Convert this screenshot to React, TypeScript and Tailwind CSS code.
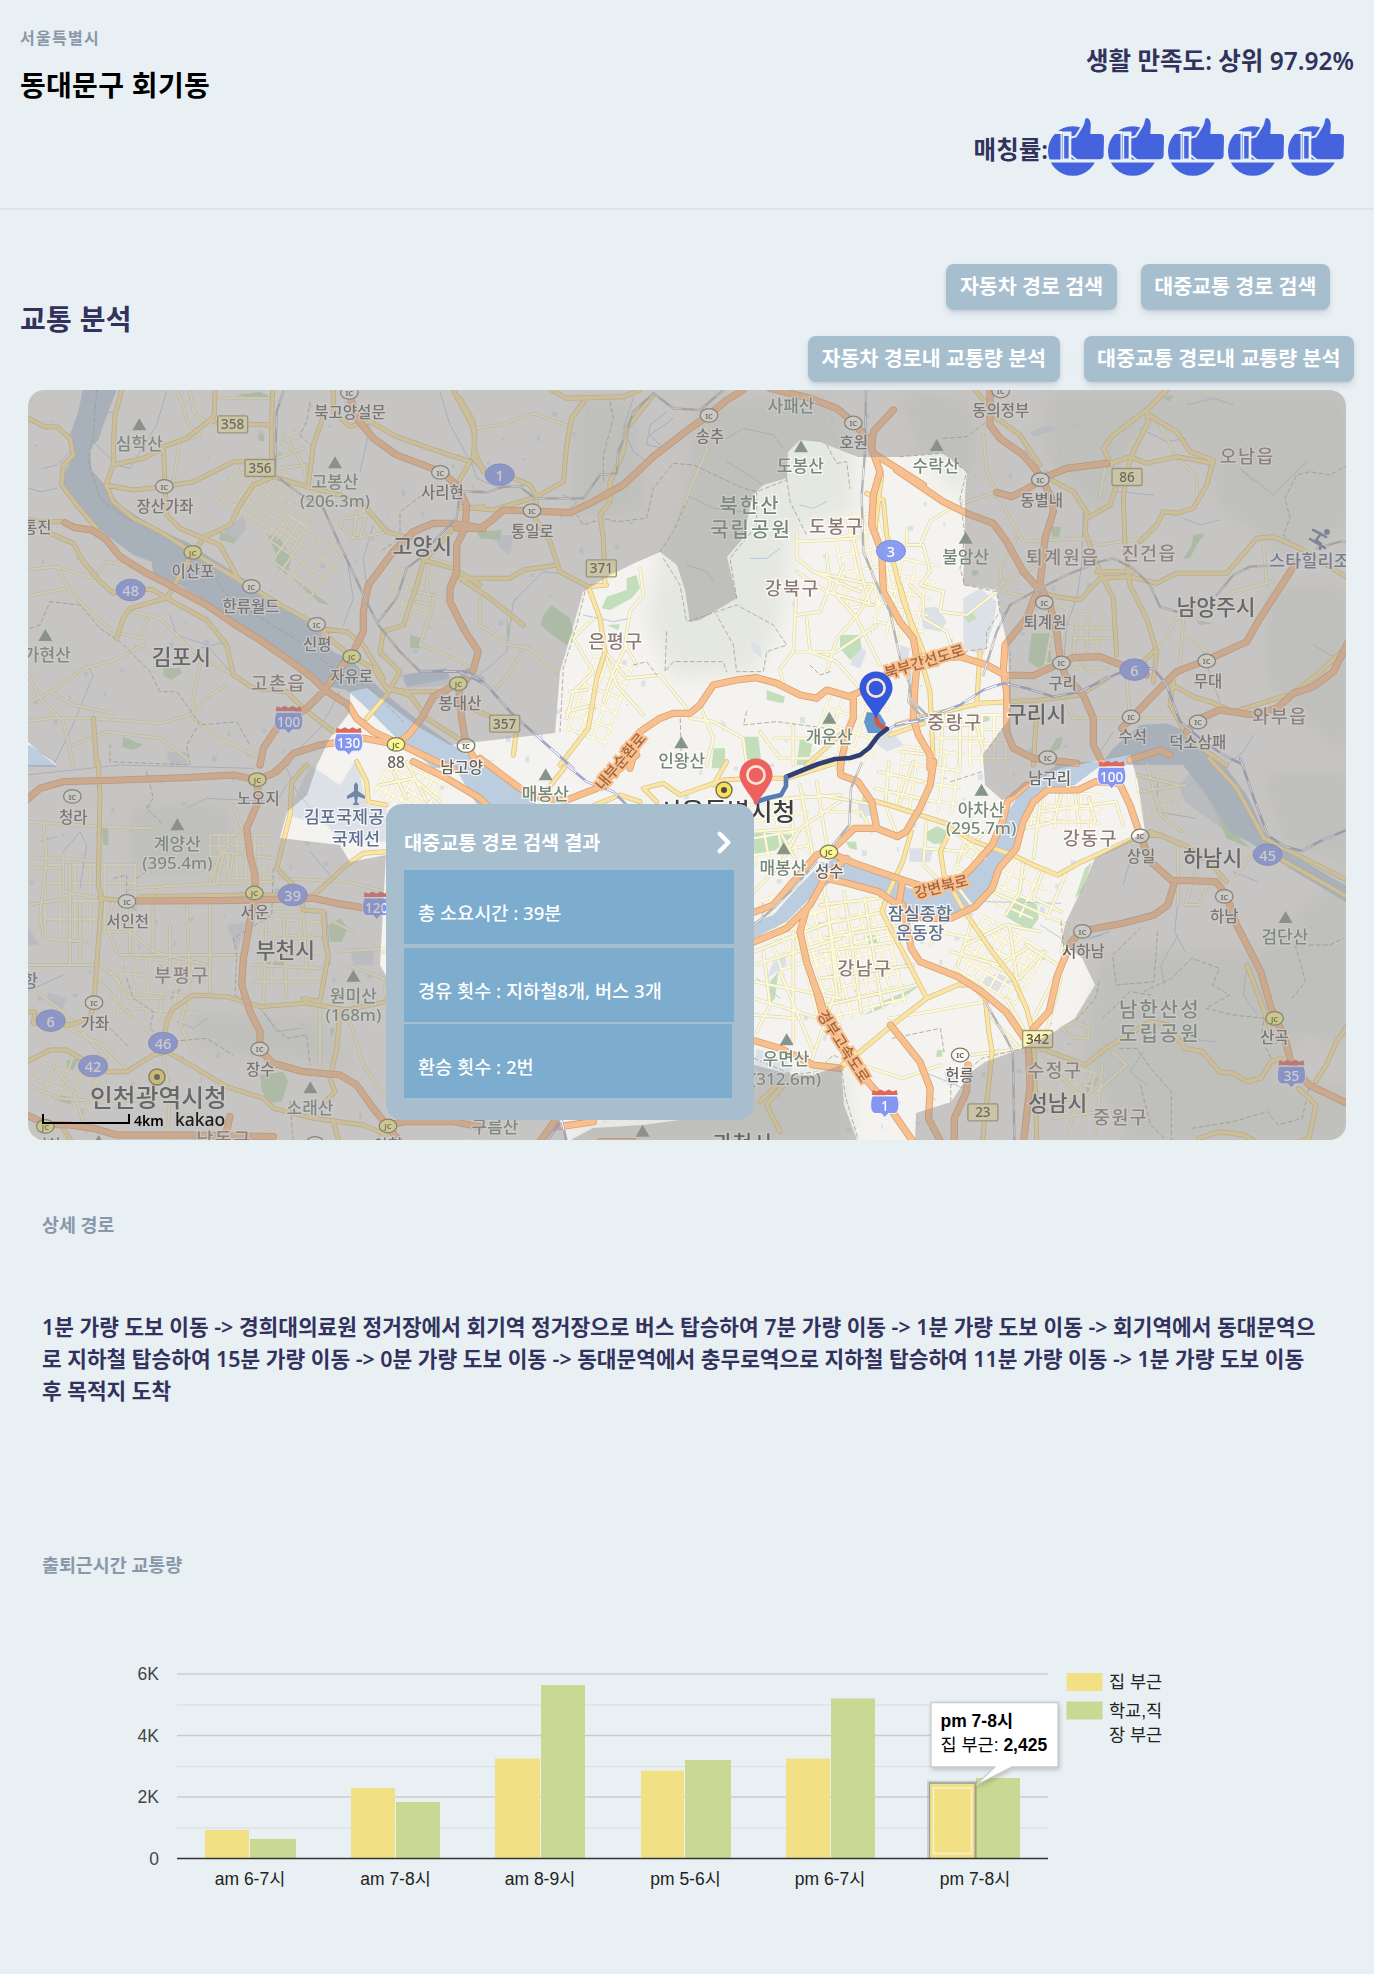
import React from "react";
import { ChevronRight } from "lucide-react";

const KR = "font-['Noto_Sans','Noto_Sans_CJK_KR',sans-serif]";

/* ---------- Map data: each sheet has its own origin and scale ---------- */

type Sheet = "A" | "B" | "C" | "D" | "E" | "F";

const sheets: Record<Sheet, [number, number, number]> = {
  A: [20, 385, 3],
  B: [460, 385, 3],
  C: [900, 385, 3],
  D: [20, 765, 3],
  E: [380, 765, 3],
  F: [820, 765, 2.904],
};

const place = (s: Sheet, x: number, y: number): [number, number] => [
  sheets[s][0] + x / sheets[s][2],
  sheets[s][1] + y / 3,
];

type Paths = Record<Sheet, string>;

const water: Paths = {
  A: "M188,15 L290,15 L265,80 L250,120 L235,165 L210,190 L215,255 L255,300 L300,360 L360,400 L430,440 L500,470 L560,510 L640,560 L760,640 L830,690 L900,740 L940,800 L1000,830 L1060,890 L1100,930 L1200,1010 L1300,1080 L1400,1150 L1240,1150 L1120,1050 L1030,960 L980,915 L930,905 L860,870 L760,790 L650,730 L600,690 L560,650 L480,600 L400,570 L395,530 L340,510 L260,450 L220,420 L180,370 L130,310 L135,260 L160,210 L150,150 L160,120 L175,80 Z M15,1075 L60,1100 L110,1145 L15,1145 Z M1150,870 L1280,850 L1290,880 L1160,905 Z",
  B: "M0,860 L40,840 L30,890 L0,910 Z",
  C: "M600,1140 L640,1090 L720,1020 L800,1015 L860,1040 L980,1140 Z",
  D: "",
  E: "M215,-10 L330,-10 L440,90 L470,118 L290,118 Z M1122,470 L1180,450 L1250,370 L1310,310 L1380,270 L1380,330 L1290,400 L1220,470 L1122,520 Z",
  F: "M0,290 L100,300 L200,340 L260,370 L350,380 L400,360 L450,310 L510,240 L540,150 L590,70 L660,20 L700,-10 L830,-10 L740,60 L660,80 L610,130 L580,230 L530,310 L490,380 L430,440 L330,460 L240,420 L180,380 L80,350 L0,330Z M1050,-5 L1170,-5 L1240,90 L1290,200 L1390,280 L1540,370 L1540,420 L1380,320 L1260,240 L1190,200 L1130,100 Z",
};

const parks: Paths = {
  A: "M740,445 L780,460 L815,520 L800,570 L770,545 L765,500 Z M600,440 L650,460 L640,475 L598,465 Z M805,570 L930,660 L900,655 Z M430,850 L480,848 L485,865 L455,885 L430,872 Z M1170,750 L1210,760 L1200,790 L1170,790 Z M650,30 L720,20 L750,35 L690,40 Z M310,1055 L370,1080 L340,1095 L305,1085 Z M715,150 h18 v18 h-18z",
  B: "M275,660 L330,700 L340,740 L320,780 L270,745 L242,720 L250,690 Z M500,580 L530,570 L540,610 L515,640 L450,675 L425,670 L440,635 L500,615 Z M1140,750 L1200,750 L1205,790 L1170,825 L1140,790 Z M920,915 L975,935 L970,955 L920,945 Z M850,1055 L895,1055 L905,1140 L860,1120 Z M1020,1060 L1060,1080 L1040,1140 L1010,1140 Z M760,1090 h35 v60 h-40z M50,440 L125,435 L120,465 L60,460 Z M140,700 L150,730 L140,770 Z M440,720 L480,718 L475,735 Z",
  C: "M395,745 L450,745 L455,830 L415,850 L385,830 Z M455,425 h28 l-5,30 h-22z M880,450 L915,445 L890,480 L870,520 L850,520 L875,480 Z M190,690 L215,680 L230,700 L205,715 Z M785,35 L820,30 L810,50 Z M885,705 L940,715 L900,720 Z M470,1060 L490,1055 L480,1090 L440,1110 Z M240,990 l25,0 l5,15 l-20,8z M215,555 l20,0 l0,15 l-18,3z",
  D: "M720,930 L790,920 L805,950 L785,1010 L745,1015 L725,975 Z M925,480 L960,460 L985,490 L965,530 L930,530 Z M455,680 L485,670 L470,695 L450,705 Z M245,190 h20 v50 h-15z M140,885 L180,880 L160,915 L140,910 Z M740,590 h60 l-5,15 h-50z M930,790 l15,0 l-10,30z M120,990 L165,1000 L160,1020 L120,1010 Z",
  E: "M330,20 L420,100 L350,60 Z M1122,200 L1240,210 L1180,260 L1122,270 Z M1170,650 L1195,620 L1185,700 L1165,720 Z M1310,470 l20,5 l-8,15z",
  F: "M310,200 L340,183 L375,200 L365,235 L330,237 L305,220 Z M560,405 L590,397 L630,420 L635,460 L610,497 L540,455 Z M125,515 L160,510 L172,540 L145,540 Z M75,230 L105,230 L108,255 L85,250 Z M770,310 L790,290 L760,380 L740,400 Z M1080,20 L1130,80 L1180,180 L1250,250 L1180,220 L1150,140 Z M340,855 h15 v20 h-18z M770,960 L810,935 L800,960 L775,985 Z M130,750 L180,710 L290,660 L260,685 L180,730 Z M630,575 l20,-15 l10,20 l-20,8z",
};

const builtUp: Paths = {
  A: "M610,440 L670,390 L680,430 L640,480 Z M1140,870 L1270,850 L1300,900 L1160,910 Z M440,1100 h60 v40 h-50z",
  B: "M870,770 L900,780 L905,820 L880,800 Z M1190,780 L1220,800 L1200,850 L1170,840 Z M100,450 L160,450 L150,510 L120,490 Z M1230,1060 L1290,1030 L1330,1080 L1280,1100 Z M780,1000 L800,1020 L790,1040 Z",
  C: "M60,670 L110,665 L140,710 L120,740 L70,730 Z M190,640 L240,610 L290,650 L280,720 L250,810 L190,790 Z M0,780 l30,10 l-10,50 l-20,-5z M390,140 L450,120 L465,135 L400,155 Z",
  D: "M800,150 L870,0 L960,60 L1010,-20 L1040,120 L1098,130 L1098,230 L960,230 L920,180 Z M990,550 h70 v50 h-60z M20,480 L60,540 L20,540Z M620,480 L680,470 L650,560 Z M80,680 l60,20 l-10,30 l-40,-10z",
  E: "M1180,590 L1215,560 L1220,600 L1160,640 Z M1130,850 L1240,900 L1200,1000 L1122,900 Z",
  F: "M260,250 L330,250 L320,290 L260,290 Z M470,640 L520,625 L560,650 L510,680 L480,665 Z M1100,0 L1150,90 L1240,220 L1180,200 L1060,110 L1040,60Z M110,110 l30,-10 l10,50 l-35,10z M360,920 l40,0 l0,40 l-30,0z",
};

const hills: Paths = {
  A: "",
  B: "M700,60 L1100,20 L1180,200 L1180,380 L1000,440 L960,720 L880,860 L640,880 L560,700 L600,520 L680,330 Z M340,40 L520,40 L560,380 L340,400 Z",
  C: "M0,20 L200,40 L240,180 L180,340 L60,200 Z M450,20 L1100,15 L1345,20 L1345,420 L1160,520 L950,350 L940,230 L760,110 L660,230 L620,400 L530,330 L430,200 Z M1100,600 L1345,600 L1345,1120 L1100,900 Z",
  D: "M330,120 L640,120 L600,330 L330,330 Z M500,740 L900,760 L1000,900 L800,880 L540,850 Z",
  E: "M560,1080 L1122,900 L1380,930 L1380,1130 L560,1130 Z",
  F: "M820,560 L1280,560 L1540,300 L1540,850 L1400,800 L1300,960 L900,1100 L760,900 Z M0,890 L80,920 L90,1130 L0,1130 Z M880,960 L1540,960 L1540,1130 L880,1130 Z M1280,20 L1540,20 L1540,300 L1350,240Z",
};

const highways: Paths = {
  A: "M135,413 L165,428 L215,435 L255,460 L300,515 L380,565 L440,595 L560,660 L640,715 L720,765 L820,835 L880,880 L915,915 L985,960 L1010,1000 L1060,1040 L1125,1070 L1250,1130 L1300,1150 M990,30 L1010,100 L1060,160 L1130,210 L1210,240 L1265,262 L1310,300 L1340,360 L1335,430 L1310,480 L1310,560 L1290,610 L1290,650 L1330,730 L1375,800 L1355,870 L1315,895 L1240,935 L1205,1000 L1165,1050 L1128,1078 M1390,430 L1300,415 L1240,415 L1180,440 L1120,500 L1045,600 L1030,680 L1030,740 L1000,800 L960,850 L915,915 L860,970 L770,1030 L730,1090 L720,1140 M1315,895 L1325,1000 L1338,1080 L1375,1140 M1128,1078 L1030,1060 L900,1080 L820,1105 L770,1160",
  B: "M-10,430 L60,430 L90,410 L130,375 L215,378 L330,383 L400,350 L490,300 L580,215 L690,130 L745,92 L800,45 L850,15 M930,10 L1050,40 L1130,70 L1180,112 L1230,170 L1240,205 L1390,300 M1300,75 L1240,140 L1235,190 L1260,260 L1240,330 L1235,420 L1265,500 L1270,620 L1320,710 L1360,760 L1372,830 L1365,900 L1360,1000 L1375,1050 L1410,1110 L1410,1150 M510,1150 L540,1040 L600,1000 L640,985 L690,985 L720,960 L760,900 L830,885 L890,878 L950,895 L1020,930 L1070,940 L1100,915 L1170,935 L1220,910 L1290,860 L1340,840 M1180,930 L1180,1000 L1160,1050 L1140,1150",
  C: "M-10,255 L130,350 L200,385 L280,415 L320,470 L370,560 L415,610 L380,700 L315,780 L310,860 L320,920 L320,1040 L340,1090 L400,1120 L530,1135 M270,15 L270,120 L300,160 L370,210 L420,270 L455,340 L460,380 L435,460 L420,600 L450,660 L470,740 L480,820 L495,870 L550,930 L580,1000 L580,1080 L610,1140 M290,322 L335,335 L375,315 L440,275 L500,250 L620,235 M-10,850 L60,825 L180,815 L260,840 L315,870 L400,872 L480,835 L520,818 L600,815 L740,870 M665,1030 L780,910 L830,860 L920,825 L1040,770 L1080,700 L1190,530 M1345,770 L1300,860 L1240,905 L1180,925 L1130,970 L1060,990 L960,975 L900,1000 L860,1040 M690,1125 L780,1095 L810,1110",
  D: "M20,105 L60,70 L130,50 L300,45 L500,38 L640,30 L712,45 L760,25 L800,-10 M712,45 L715,110 L680,190 L690,270 L705,330 L705,400 L690,470 L670,580 L665,660 L690,740 L720,800 L720,855 L760,895 L850,920 L960,930 L1010,960 L1060,1030 L1100,1080 L1140,1130 M350,408 L600,407 L880,400 L950,415 L1040,430 M20,1050 L80,1078 L150,1080 L220,1090 L290,1110 L500,1110 L760,1115 M630,1055 L615,1120 M1100,1080 L1160,1070 L1300,1070 L1380,1085",
  E: "M100,-10 L200,40 L300,100 L330,130 M300,-20 L420,70 L490,100 L560,105 L650,70 L720,10 L770,-30 M1100,540 L1220,490 L1290,420 L1340,330 L1400,280 M1280,430 L1260,500 L1280,590 L1310,680 L1330,760 M1100,820 L1200,850 L1300,900 L1380,910 M1100,450 L1180,420 L1240,350 L1310,270 L1345,258 M540,1085 L640,1070 M480,1130 L530,1060 M660,1130 L760,1130",
  F: "M60,-10 L60,30 L110,50 L150,110 L165,190 L100,190 L60,230 L25,262 L100,295 L240,345 L230,410 M330,-10 L320,60 L290,130 L250,200 L225,215 L165,190 M0,335 L80,355 L170,380 L240,430 L300,460 L380,460 L450,425 L500,370 L520,310 L570,250 L590,170 L620,110 L660,75 L750,75 L800,50 L870,55 L900,120 L930,212 L960,290 L1020,345 L1150,350 L1180,390 L1210,480 L1280,620 L1310,730 L1350,820 L1370,900 L1420,960 L1540,1020 M600,60 L545,110 L530,170 L500,240 L440,310 L390,360 L330,375 L240,345 M1030,350 L1010,420 L970,450 L880,475 L760,498 L730,530 L690,630 L665,740 L620,790 L605,850 L610,960 L590,1140 M240,420 L265,550 L290,590 L400,635 L470,680 L540,740 L600,830 M205,780 L290,890 L320,970 L315,1060 L350,1130 M-20,650 L0,700 L20,770 L80,880 L190,1010 L270,1130 M430,900 L425,980 L390,1060 L390,1140",
};

const mainRoads: Paths = {
  A: "M305,15 L285,90 L280,180 L280,240 L258,300 L280,350 L340,400 L420,440 L515,500 L690,605 L800,670 L890,718 L940,770 L995,815 L1060,850 L1100,910 L1160,920 L1280,920 M15,95 L75,125 L110,125 L150,160 L160,210 L130,240 L125,300 L170,360 L230,430 M15,400 L60,410 L135,410 M90,445 L160,475 L190,530 L240,590 L280,625 L330,610 L400,615 L440,640 L560,705 L620,780 L640,870 L700,910 L800,920 L850,970 L940,1040 M435,640 L330,670 L310,700 L290,760 M440,640 L520,500 L555,455 L630,420 L660,360 L700,300 L760,275 L860,305 L960,330 L1040,370 L1100,440 L1170,460 M585,15 L583,90 L570,105 L500,160 L430,185 L435,300 L440,390 L480,430 L600,480 L660,590 M260,300 L340,315 L430,305 L520,290 L640,230 L760,230 M758,15 L755,110 L755,230 M570,105 L600,115 L750,120 M280,240 L370,220 L430,190 M940,15 L940,80 L990,125 L1050,110 L1130,155 L1230,190 L1350,230 L1310,300 M915,80 L880,180 L865,300 M1300,15 L1340,90 L1365,140 L1360,220 L1390,250 M1320,370 L1390,365 M1210,530 L1190,600 L1150,720 L1090,740 L1080,800 L1140,860 L1100,930 L1040,1000 M890,730 L980,740 L1030,780 L1090,880 M220,1000 L230,1140 M1100,910 L1170,930 L1220,1000 L1330,1070 M1210,525 L1300,550 L1380,600 M1210,525 L1240,500 L1300,430",
  B: "M0,40 L40,110 L45,200 L70,260 L150,275 L210,300 L230,335 L225,400 L270,470 L300,560 L385,605 L420,700 L435,800 L410,880 L385,1030 L300,1140 M275,15 L320,40 L490,35 L540,15 M375,45 L335,100 L320,180 L310,290 L230,335 L100,375 L0,365 M580,30 L500,130 L490,200 L450,290 L450,350 L420,390 L430,460 L435,600 M0,580 L150,580 L190,555 L290,540 M0,580 L90,640 L190,720 M385,605 L440,600 M0,955 L80,990 L170,1030 L160,1110 M1220,325 L1270,345 L1280,450 L1330,650 L1390,800 M1265,270 L1245,430 M1290,1050 L1390,1015 M1140,1050 L1040,1140",
  C: "M800,15 L740,75 L640,150 L610,190 L635,240 M740,75 L745,110 L700,200 L680,260 L670,340 L675,480 L690,600 L740,700 L770,800 L760,890 M745,90 L830,140 L870,200 L940,225 L920,300 L880,370 L830,385 L790,380 L770,420 L720,470 M620,240 L690,215 L740,235 L830,215 L940,235 M290,100 L360,150 L420,240 M455,285 L520,320 L560,380 L555,440 L600,560 L640,640 L650,810 M560,400 L630,360 L650,300 M420,620 L470,635 L540,645 L600,580 L690,575 L770,595 L830,565 L980,565 L1070,460 L1120,455 L1200,490 L1345,580 M700,560 L590,560 M225,15 L265,60 M0,600 L40,740 L90,920 L100,1140 M-10,1020 L90,990 L240,955 L420,945 L540,930 L620,880 M240,800 L230,960 M800,890 L880,935 L930,950 L1000,980 L1100,950 L1160,930 M820,890 L810,960 L860,1050 L920,1100 L980,1140 M410,980 L400,1140 M1345,780 L1250,870 L1170,930 M760,800 L720,840",
  D: "M235,-10 L240,90 L235,360 L245,400 L230,600 L222,715 M240,400 L320,408 M360,395 L700,390 L880,392 L980,300 L1030,265 L1098,260 M860,0 L815,50 L810,150 L790,230 L770,310 L820,360 M845,400 L850,435 L910,440 L915,530 L925,570 L900,710 L850,700 L860,715 L980,735 L1098,710 M430,830 L440,770 L460,730 L520,690 L620,695 L720,725 L850,715 M20,890 L90,855 L140,855 L200,890 L260,920 L320,920 L400,870 L440,860 L520,905 L620,965 L730,1000 L760,1030 L880,1060 L1030,1080 L1098,1110 M20,740 L45,740 L40,775 L150,780 L210,760 L225,700 M960,740 L950,850 L930,940 L945,980 L915,1010 M940,1070 L960,1140 M1010,-10 L1040,50 L1045,110 L1098,120 M130,1090 L160,1140",
  E: "M830,110 L790,70 L850,55 L900,90 L1030,45 L1120,40 L1220,40 L1380,-10 M560,0 L480,100 M620,130 L720,90 L780,110 M1210,960 L1160,1020 L1200,1100 M1140,1010 L1190,960 M1040,-10 L1000,60",
  F: "M130,100 L200,120 L290,150 L380,180 M265,200 L240,290 L200,380 L180,440 L310,700 L210,780 L70,900 M380,190 L350,260 L360,330 L420,440 L500,560 L560,640 L600,730 L620,810 L630,1140 M310,700 L400,660 L440,660 L480,700 L490,800 L500,860 L490,960 L470,1140 M380,190 L450,230 L560,270 L620,300 L690,330 L760,290 L900,225 L960,200 L1060,240 L1110,280 M1130,-20 L1210,70 L1290,220 L1540,350 M930,212 L990,210 L1050,240 M1300,260 L1540,400 M640,850 L720,880 L770,900 L830,850 L960,770 L1010,780 L1060,850 L1110,860 L1160,920 L1200,925 L1240,950 L1280,940 L1310,890 L1340,880 M1240,600 L1270,680 L1320,830 M1540,770 L1500,830 L1470,900 L1440,950 M1390,970 L1440,1020 L1420,1120 L1360,1140 M1100,1120 L1160,1100 L1230,1110 L1280,1140 M1130,290 L1180,350 M0,900 L60,905 L100,860",
};

const localRoads: Paths = {
  A: "M470,20 L490,60 L500,110 L540,150 L480,170 L460,290 M510,20 L520,80 L570,120 M600,40 L750,40 M1300,540 L1230,520 L1220,600 L1230,650 M1180,620 L1240,630 M1190,650 L1240,660 L1200,780 L1260,800 L1380,860 M15,555 L110,545 L220,580 L260,530 L360,550 M15,635 L140,610 L220,690 L280,740 L360,760 L380,700 M110,545 L150,620 L220,690 M340,680 L420,700 L520,800 L640,870 M15,850 L60,940 L130,1010 L160,1140 M15,960 L110,910 L190,850 L270,830 L370,780 M15,1010 L90,1000 L220,1000 L420,1015 L510,990 L570,930 L620,900 M90,920 L160,960 L280,985 M540,840 L520,940 L520,1000 L600,1060 L720,1120 M160,1080 L260,1040 L420,1060 L500,1120 M970,400 L1060,390 L1110,440 L1000,460 L960,420 Z M1010,380 L1000,460 M1040,380 L1020,460 M790,150 L850,240 L860,290 M770,180 L840,150 M770,220 L850,190 M770,250 L860,240",
  B: "M50,130 L120,120 L220,85 L330,125 M660,400 L690,310 L740,200 L740,120 M1010,440 L1010,520 L1060,560 L1200,620 M1100,510 L1110,600 L1080,680 L1010,690 M1010,600 L1000,800 L960,850 L970,900 M1040,700 L1050,800 L1130,830 L1200,910 M1010,470 L1200,460 M1060,560 L1240,600 L1200,680 L1130,760 L1100,860 M1150,540 L1120,620 L1190,700 L1260,840 M1010,800 L1130,800 L1250,720 M1010,560 L1100,620 L1240,660 M540,550 L550,630 L510,680 L495,780 L530,840 M435,800 L500,880 L600,870 L640,920 L680,970 M400,700 L340,760 L400,860 L340,920 L320,1000 M440,820 L470,900 L550,990 M500,780 L460,860 L430,950 M330,920 L380,915 M320,980 L400,960 M720,960 L760,1060 L740,1140 M690,1000 L760,1010 L850,1060 L860,1140 M1180,460 L1200,550 L1230,660 M110,910 L150,860 L200,780 M60,640 L60,720 L150,780 L210,790 L290,860 M900,1040 L960,1120 L1100,1120 M940,1060 L1100,1060 M1000,1020 L1000,1140",
  C: "M20,430 L20,480 L70,480 L90,560 L60,600 L130,620 L120,680 L200,690 L290,620 M30,600 L70,640 L70,700 L140,740 L160,800 M150,370 L90,410 L60,480 M250,150 L260,260 L330,400 L370,470 L540,460 L600,480 L720,460 M190,355 L290,320 M600,330 L620,220 M830,220 L890,270 L890,350 M780,120 L820,200 M350,460 L300,550 L310,620 L400,640 M300,600 L410,540 M530,720 L520,800 L560,850 L620,850 M560,710 L560,800 M520,760 L640,760 M530,730 L640,730 M490,930 L520,1000 L690,1000 M680,880 L690,1000 L930,1000 M770,800 L830,700 L920,690 L1000,620 L1120,590 M1090,470 L1100,600 M850,750 L920,800 M840,830 L850,700 L900,640 M0,1100 L100,1110 M110,1020 L230,1020 L250,1100 M130,980 L120,1140 M180,980 L180,1140 M110,1060 L250,1060",
  D: "M20,170 L240,185 L400,190 M20,280 L130,280 L235,290 M70,170 L80,280 L60,450 M130,270 L130,380 L240,400 M20,310 L120,310 M20,420 L150,400 M60,440 L70,520 L200,530 M150,300 L150,600 M180,420 L180,600 M20,600 L240,600 L300,650 M240,500 L330,500 L400,560 L560,600 M330,370 L600,355 L760,350 M440,360 L330,430 L330,560 M280,410 L260,480 L290,560 M400,420 L400,560 M500,420 L510,650 M570,410 L570,680 M300,570 L660,570 M450,480 L450,600 M240,650 L340,760 L420,830 M270,620 L330,700 L430,700 M20,660 L130,740 L260,880 M120,780 L250,840 L320,910 M640,120 L670,200 L600,270 L570,350 M600,260 L760,280 M610,270 L590,350 M640,270 L625,350 M760,440 L850,440 L860,620 M760,520 L910,520 M740,450 L730,720 M790,440 L800,700 M700,600 L900,610 M700,650 L900,650 M500,700 L480,780 L520,860 M900,720 L900,930 M1000,500 L940,470 M960,560 L1098,550 M980,600 L1090,640 L1098,700 M20,960 L120,1000 L250,1010 L430,1000 M100,900 L160,980 L200,1100 M430,870 L450,1000 L440,1140 M780,340 L980,350 L1098,380 M980,740 L1030,900 L1098,1000",
  E: "M1122,560 L1380,460 M1122,600 L1380,520 M1122,650 L1380,700 M1122,700 L1380,780 M1150,560 L1170,720 L1130,800 M1240,500 L1240,830 M1330,350 L1380,680 M1200,620 L1300,860 M1122,380 L1200,300 L1260,190 L1380,110 M1122,200 L1240,190 L1230,100 L1380,90 M1200,200 L1250,290 M1260,60 L1300,280 M1310,50 L1340,240 M40,20 L80,100 M0,60 L100,40 L180,110 M80,-10 L140,110 M1122,750 L1250,760 M1290,900 L1360,700",
  F: "M0,90 L160,120 M0,140 L120,140 L150,200 M200,-10 L190,120 L220,200 M270,-10 L230,120 M170,20 L300,50 M160,70 L290,100 M390,200 L480,280 M300,250 L420,260 L480,200 M310,160 L300,300 L350,350 M440,170 L400,290 M640,110 L620,280 M700,90 L680,170 L600,190 M780,100 L800,170 L680,170 M740,80 L750,170 M640,140 L860,110 L880,180 M500,380 L720,480 L700,560 M590,290 L580,380 L540,450 M650,310 L620,400 L700,440 M720,310 L660,460 M420,540 L540,480 L640,500 M380,560 L520,600 L600,550 M440,470 L400,600 M550,480 L580,700 M500,600 L580,640 L650,560 M600,540 L690,600 M620,760 L700,600 L730,540 M700,640 L660,790 M0,420 L170,400 M0,480 L190,440 M0,560 L230,530 M0,640 L270,600 M20,400 L50,700 M70,380 L120,740 M130,400 L180,720 M10,520 L240,480 M20,720 L280,660 M200,760 L320,740 L480,710 M540,700 L590,790 M500,760 L590,860 M300,490 L440,520 M920,30 L1040,60 M930,80 L1060,60 M950,0 L990,150 L1050,200 M1040,420 L1040,240 M640,860 L590,850 L440,870 M350,900 L240,940 L90,890 M650,1010 L780,1000 L890,900 L850,860 M740,770 L780,790 L780,820 L740,820 L700,790 Z M680,1060 L880,1030 M760,960 L720,1100 M820,900 L800,1100 M1100,290 L1060,420 L1100,420 L1130,350 M650,880 L760,1000 M1260,260 L1210,330 M360,470 L320,540 M380,340 L440,420",
};

const streams: Paths = {
  A: "M15,305 L60,320 L110,310 M70,250 L110,240 L160,190 M220,170 L290,240 L330,250 M200,30 L240,90 L280,80 M440,20 L410,120 L330,250 M1260,20 L1290,120 L1340,210 L1375,250 M1030,60 L1050,130 L1020,260 M940,440 L980,520 L1000,640 L970,720 M1060,420 L1030,520 L1040,600 M100,1140 L150,1040 L220,870 L200,840 M640,870 L560,780 L470,750 L450,690 M960,920 L900,1030 L800,1130 M620,770 L540,790 M30,1080 L90,1120",
  B: "M520,40 L490,130 L520,200 L560,230 M640,100 L570,150 L610,190 L560,180 L570,120 L620,80 M30,220 L50,280 L120,310 L200,300 M310,330 L350,350 L300,400 M330,570 L250,560 L160,650 L140,800 L60,870 M870,520 L920,520 L960,490 M800,160 L850,130 L940,150 L970,190 M800,230 L850,260 L910,300 M680,330 L760,370 L850,380 M680,540 L740,560 L760,590 M370,690 L460,710 L510,700 M1020,360 L1060,370 L1100,350",
  C: "M550,380 L545,540 L530,640 L500,720 L490,850 M720,130 L800,170 L860,160 M860,60 L940,40 L1000,60 M1220,230 L1120,330 L1020,250 L1060,290 M1240,780 L1290,810 L1340,820 M910,800 L940,900 L960,950 M850,400 L900,420 L960,405 M1060,1050 L1030,1100 L980,1140 M640,1040 L600,1100 M650,320 L760,330",
  D: "M130,260 L180,200 L200,240 L180,370 M20,30 L300,0 L700,10 M800,10 L830,80 L890,150 M870,260 L930,330 M60,230 L110,215 M20,680 L130,630 M920,440 L930,600 M470,770 L520,790 L560,760 M800,60 L770,110 L560,100 L500,130 M730,740 L770,800 L840,790",
  E: "M1130,640 L1200,700 M1150,440 L1140,480",
  F: "M980,40 L980,140 L1090,160 M1040,400 L1030,500 L1060,560 M1040,510 L990,600 L1000,660 M900,290 L880,360 M820,510 L780,520 L840,500 M1240,600 L1230,690 L1270,750 M1060,820 L1150,830 M940,860 L900,920 L950,960 M1200,320 L1270,350 M300,920 L440,980 M640,480 L700,520 M480,410 L700,415",
};

const rails: Paths = {
  A: "M790,20 L770,80 L765,270 L830,320 L910,370 L960,480 L1040,650 L1075,720 L1140,800 L1200,860 L1340,860 L1390,880 M1075,710 L1130,640 L1160,550 L1200,520 L1250,460 L1310,400 L1320,320 L1390,320",
  B: "M0,320 L80,322 L130,305 L180,305 L225,340 L370,340 L420,270 L470,265 L475,200 L500,140 L520,80 L580,25 L640,70 L720,75 L790,15 M1218,15 L1215,200 L1205,330 L1210,500 L1260,620 L1290,680 L1320,820 L1350,900 L1345,950 L1390,1000",
  C: "M30,860 L30,940 L90,1000 M250,870 L290,740 L330,660 L420,610 L500,570 L600,530 L640,520 L700,550 L750,600 L780,665 L830,680 M950,630 L1000,570 L1050,545 L1150,540 M1250,490 L1320,470 L1345,470",
  D: "",
  E: "M1122,480 L1180,430 L1240,370 L1310,290",
  F: "M120,-5 L90,70 L85,180 L30,250 M480,710 L540,820 L560,860 L565,1140",
};

const blueRails: Paths = {
  A: "M1200,858 L1330,860 L1390,890",
  B: "M0,860 L80,900 L150,980 L250,1070 L340,1150 M1270,1040 L1310,1020 L1390,1005",
  C: "M-10,1018 L90,995 L180,960 L250,915 L310,895 L380,910 L460,935 L540,920 L620,880 L690,850 L760,850 L800,900 L840,1010 L900,1060 L970,1110 L1030,1140",
  D: "",
  E: "M560,0 L620,50 L700,80 L740,120 M500,1130 L545,1065 L560,1130",
  F: "M1220,-20 L1260,100 L1300,210 L1350,245 L1400,258 L1450,230 L1540,190",
};

const bounds: Paths = {
  A: "M230,15 L220,150 L205,230 L240,340 L320,400 L450,450 L580,570 L620,630 L740,710 L840,770 L940,850 L1050,910 L1150,1010 M30,730 L60,720 L90,650 L180,660 L240,730 L300,770 L390,860 L420,920 L470,920 L500,960 L540,1020 L650,1010 L690,1080 M870,50 L860,110 L840,150 L880,190 M1220,320 L1140,380 L1140,460 L1080,500 M530,1030 L500,1080 L510,1140 L270,1130 L270,1080",
  B: "M450,50 L460,100 L430,210 L430,290 M350,390 L370,420 L430,400 L470,410 L560,400 L580,310 L640,235 L700,240 L850,310 L890,320 M600,500 L640,440 L680,350 M610,520 L660,600 L680,710 L830,660 L940,720 L980,780 L920,800 L910,860 L830,860 L820,780 L770,690 M620,740 L615,860 L640,830 L790,830 L800,860 M375,620 L350,720 L310,850 L300,1040 M980,280 L990,350 L1040,450 M830,640 L810,520 L890,420 L890,320 L980,285 M1100,180 L1130,235 L1160,230 L1170,310 M660,980 L665,1140 M860,980 L850,1020 L950,1010 L1100,1030 M520,840 L560,830 L590,870 M1050,840 L1080,870 L1110,860",
  C: "M0,215 L130,205 L200,260 L180,340 L195,450 L180,550 L195,600 L290,620 L300,680 L260,740 L260,790 L190,800 M130,160 L200,155 L260,110 M1345,240 L1290,270 L1230,260 L1190,270 L1155,340 L1170,400 L1150,450 L1200,500 M330,800 L330,1000 L250,1110",
  D: "M380,20 L400,100 L380,130 L430,180 M280,340 L320,330 L320,400 L350,440 M350,340 L430,280 M640,520 L650,570 L645,690 L720,730 L760,780 L800,820 L860,810 L870,900 M760,310 L755,450 L640,520 M320,640 L340,700 L400,740 L390,790 L440,830 L560,820 L640,870 M270,790 L330,850 M810,1010 L820,1140",
  E: "M1122,880 L1240,930 L1310,920 L1360,870 L1380,880",
  F: "M980,500 L970,650 L860,660 L850,570 L930,490 M940,680 L1020,640 L1080,580 L1160,610 L1140,660 L1190,690 L1120,730 L1200,750 L1290,760 L1280,820 L1320,900 M810,650 L800,700 L740,770 M820,760 L900,680 L960,690 M870,850 L920,850 L960,910 L1020,980 L1020,1140 M1380,540 L1410,650 L1370,700 M1380,540 L1480,540 L1520,520 M210,820 L350,790 L360,860 M60,900 L75,1000 L110,1120 M380,1010 L380,960 L470,880 L590,850 M930,960 L960,1080 L1000,1120 M1080,1090 L1200,1070 L1300,1040 L1330,1080 L1400,1060 L1420,970 M700,470 L710,570 M380,50 L470,20",
};

// Seoul city limits, left undimmed, plus a small strip on the west edge.
const seoul =
  "M800,440 L820,442 L858,457 L897,457 L943,453 L967,472 L965,495 L965,535 L963,585 L997,590 L1000,612 L1008,648 L1010,718 L983,755 L985,785 L1002,800 L1014,796 L1027,785 L1061,768 L1092,762 L1130,755 L1138,782 L1145,832 L1123,843 L1095,858 L1085,882 L1066,922 L1061,942 L1082,958 L1095,985 L1075,1018 L1054,1032 L1023,1048 L985,1062 L971,1072 L951,1102 L916,1113 L915,1142 L858,1142 L844,1105 L841,1065 L813,1075 L793,1075 L754,1065 L680,1120 L643,1125 L593,1128 L567,1142 L556,1115 L400,1000 L380,965 L386,855 L350,862 L340,845 L280,838 L287,812 L307,795 L317,765 L330,738 L350,712 L350,692 L367,688 L420,728 L450,745 L520,737 L555,733 L560,672 L570,638 L583,592 L610,575 L637,562 L660,552 L677,565 L685,590 L690,622 L700,620 L737,598 L727,557 L743,538 L753,495 L763,485 L787,478 L788,452 Z M28,742 L57,765 L28,765 Z";

type Tone = "town" | "city" | "district" | "hill" | "park" | "blue";
const toneFill: Record<Tone, string> = {
  town: "#68635e",
  city: "#4a4a4a",
  district: "#8b7b74",
  hill: "#768879",
  park: "#768879",
  blue: "#60718f",
};
const toneSize: Record<Tone, number> = { town: 15.5, city: 21.5, district: 18.5, hill: 17, park: 20, blue: 17.5 };
const toneSpacing: Record<Tone, number> = { town: 0, city: 0, district: 1.4, hill: 0, park: 2, blue: 0 };

const labels: [Sheet, number, number, string, Tone][] = [
  ["A", 990, 80, "북고양설문", "town"],
  ["A", 358, 175, "심학산", "hill"],
  ["A", 945, 288, "고봉산", "hill"],
  ["A", 945, 345, "(206.3m)", "hill"],
  ["A", 1267, 322, "사리현", "town"],
  ["A", 435, 363, "장산가좌", "town"],
  ["A", 52, 425, "통진", "town"],
  ["A", 1207, 482, "고양시", "city"],
  ["A", 519, 558, "이산포", "town"],
  ["A", 693, 663, "한류월드", "town"],
  ["A", 892, 778, "신평", "town"],
  ["A", 82, 808, "가현산", "hill"],
  ["A", 484, 815, "김포시", "city"],
  ["A", 775, 892, "고촌읍", "district"],
  ["A", 995, 872, "자유로", "town"],
  ["A", 1320, 953, "봉대산", "town"],
  ["A", 1128, 1132, "88", "town"],
  ["B", 993, 60, "사패산", "hill"],
  ["B", 750, 152, "송추", "town"],
  ["B", 1181, 172, "호원", "town"],
  ["B", 1021, 242, "도봉산", "hill"],
  ["B", 870, 362, "북한산", "park"],
  ["B", 873, 434, "국립공원", "park"],
  ["B", 1130, 422, "도봉구", "district"],
  ["B", 217, 438, "통일로", "town"],
  ["B", 997, 608, "강북구", "district"],
  ["B", 468, 765, "은평구", "district"],
  ["B", 1108, 1055, "개운산", "hill"],
  ["B", 665, 1125, "인왕산", "hill"],
  ["C", 302, 75, "동의정부", "town"],
  ["C", 108, 240, "수락산", "hill"],
  ["C", 1042, 210, "오남읍", "district"],
  ["C", 425, 344, "동별내", "town"],
  ["C", 197, 515, "불암산", "hill"],
  ["C", 488, 515, "퇴계원읍", "district"],
  ["C", 748, 502, "진건읍", "district"],
  ["C", 1228, 524, "스타힐리조", "blue"],
  ["C", 948, 664, "남양주시", "city"],
  ["C", 435, 711, "퇴계원", "town"],
  ["C", 488, 893, "구리", "town"],
  ["C", 924, 887, "무대", "town"],
  ["C", 410, 985, "구리시", "city"],
  ["C", 165, 1008, "중랑구", "district"],
  ["C", 1140, 990, "와부읍", "district"],
  ["C", 698, 1053, "수석", "town"],
  ["C", 893, 1070, "덕소삼패", "town"],
  ["D", 1325, 5, "남고양", "town"],
  ["D", 160, 155, "청라", "town"],
  ["D", 715, 100, "노오지", "town"],
  ["D", 472, 235, "계양산", "hill"],
  ["D", 472, 293, "(395.4m)", "hill"],
  ["D", 972, 152, "김포국제공", "blue"],
  ["D", 1008, 220, "국제선", "blue"],
  ["D", 323, 468, "서인천", "town"],
  ["D", 704, 440, "서운", "town"],
  ["D", 796, 553, "부천시", "city"],
  ["D", 486, 628, "부평구", "district"],
  ["D", 1000, 690, "원미산", "hill"],
  ["D", 1000, 748, "(168m)", "hill"],
  ["D", 30, 646, "항", "blue"],
  ["D", 225, 773, "가좌", "town"],
  ["D", 721, 913, "장수", "town"],
  ["D", 870, 1028, "소래산", "hill"],
  ["D", 612, 1120, "남동구", "district"],
  ["D", 82, 1140, "인하", "town"],
  ["D", 1104, 1140, "안현", "town"],
  ["E", 496, 85, "매봉산", "hill"],
  ["E", 1209, 308, "매봉산", "hill"],
  ["E", 345, 1083, "구름산", "hill"],
  ["E", 345, 1140, "(240.8m)", "hill"],
  ["E", 1218, 880, "우면산", "hill"],
  ["E", 1218, 940, "(312.6m)", "hill"],
  ["E", 1087, 1132, "과천시", "city"],
  ["F", 667, 38, "남구리", "town"],
  ["F", 468, 132, "아차산", "hill"],
  ["F", 468, 188, "(295.7m)", "hill"],
  ["F", 785, 217, "강동구", "district"],
  ["F", 932, 272, "상일", "town"],
  ["F", 1140, 276, "하남시", "city"],
  ["F", 27, 317, "성수", "town"],
  ["F", 290, 443, "잠실종합", "blue"],
  ["F", 290, 500, "운동장", "blue"],
  ["F", 1174, 453, "하남", "town"],
  ["F", 1350, 514, "검단산", "hill"],
  ["F", 765, 558, "서하남", "town"],
  ["F", 130, 606, "강남구", "district"],
  ["F", 987, 732, "남한산성", "park"],
  ["F", 987, 804, "도립공원", "park"],
  ["F", 1320, 815, "산곡", "town"],
  ["F", 405, 930, "헌릉", "town"],
  ["F", 682, 914, "수정구", "district"],
  ["F", 690, 1011, "성남시", "city"],
  ["F", 873, 1053, "중원구", "district"],
];

const peaks: [Sheet, number, number][] = [
  ["A", 358, 118], ["A", 945, 232], ["A", 76, 750], ["B", 1023, 184], ["B", 1108, 998], ["B", 664, 1072],
  ["C", 110, 180], ["C", 197, 458], ["D", 472, 178], ["D", 1000, 632], ["D", 871, 967], ["D", 236, 1128],
  ["E", 497, 28], ["E", 1211, 250], ["E", 1220, 823], ["E", 788, 1097], ["F", 469, 74], ["F", 1352, 456],
];

const junctions: [Sheet, number, number, "IC" | "JC"][] = [
  ["A", 988, 22, "IC"], ["A", 1261, 262, "IC"], ["A", 433, 304, "IC"], ["A", 518, 502, "JC"], ["A", 694, 604, "IC"],
  ["A", 890, 718, "IC"], ["A", 995, 815, "JC"], ["A", 1315, 896, "JC"], ["A", 1128, 1078, "JC"], ["A", 1338, 1082, "IC"],
  ["B", 747, 91, "IC"], ["B", 1180, 114, "IC"], ["B", 216, 377, "IC"],
  ["C", 302, 18, "IC"], ["C", 421, 284, "IC"], ["C", 433, 652, "IC"], ["C", 484, 834, "IC"], ["C", 920, 828, "IC"],
  ["C", 693, 996, "IC"], ["C", 894, 1011, "IC"], ["C", 443, 1118, "IC"],
  ["D", 157, 94, "IC"], ["D", 712, 44, "JC"], ["D", 321, 409, "IC"], ["D", 703, 384, "JC"], ["D", 222, 713, "IC"],
  ["D", 719, 852, "IC"], ["D", 76, 1084, "JC"], ["D", 1104, 1083, "JC"], ["D", 885, 1135, "IC"],
  ["F", 26, 261, "JC"], ["F", 930, 213, "IC"], ["F", 1174, 394, "IC"], ["F", 762, 499, "IC"], ["F", 1320, 760, "JC"], ["F", 407, 870, "IC"],
];

const ovals: [Sheet, number, number, string][] = [
  ["A", 332, 615, "48"], ["B", 119, 269, "1"], ["B", 1293, 498, "3"], ["C", 703, 854, "6"], ["D", 818, 390, "39"],
  ["D", 92, 767, "6"], ["D", 429, 834, "46"], ["D", 219, 903, "42"], ["F", 1300, 269, "45"],
];

const plates: [Sheet, number, number, string][] = [
  ["A", 638, 118, "358"], ["A", 720, 249, "356"], ["B", 424, 550, "371"], ["B", 134, 1016, "357"],
  ["C", 681, 276, "86"], ["F", 632, 822, "342"], ["F", 473, 1042, "23"],
];

const shields: [Sheet, number, number, string][] = [
  ["A", 806, 1003, "100"], ["A", 986, 1067, "130"], ["D", 1070, 420, "120"], ["F", 847, 28, "100"], ["F", 188, 1014, "1"], ["F", 1369, 925, "35"],
];

function Layer({ paths, ...rest }: { paths: Paths } & React.SVGProps<SVGGElement>) {
  return (
    <g strokeLinecap="round" strokeLinejoin="round" {...rest}>
      {(Object.keys(sheets) as Sheet[]).map((k) => (
        <path
          key={k}
          d={paths[k]}
          vectorEffect="non-scaling-stroke"
          transform={`translate(${sheets[k][0]} ${sheets[k][1]}) scale(${1 / sheets[k][2]} ${1 / 3})`}
        />
      ))}
    </g>
  );
}

// Small residential street grids: centre x, centre y, width, height, angle, step.
const grids: number[][] = [
  [270, 500, 90, 60, 32, 9], [300, 560, 70, 60, 35, 13], [1000, 960, 70, 60, 30, 10], [850, 960, 90, 110, -14, 11],
  [800, 930, 60, 80, -18, 12], [1075, 640, 50, 60, 10, 12], [905, 600, 50, 80, 12, 14], [865, 560, 50, 90, -10, 15],
  [240, 860, 60, 50, 0, 9], [90, 900, 90, 70, 0, 15], [160, 990, 80, 60, 5, 14], [290, 950, 60, 60, 4, 13],
  [410, 790, 60, 40, 28, 9], [600, 700, 40, 80, 20, 13], [780, 830, 60, 60, -10, 14], [850, 730, 60, 60, 18, 13],
  [930, 780, 60, 60, 8, 14], [1060, 810, 80, 36, 4, 12], [1000, 880, 90, 50, 24, 13], [1160, 795, 40, 40, -12, 11],
  [1060, 1090, 60, 50, 14, 12], [420, 600, 60, 50, 16, 14], [70, 1080, 70, 50, 20, 15], [990, 740, 40, 50, 0, 12],
];

function StreetGrid() {
  return (
    <g fill="none" strokeLinecap="round">
      {[["#dedbc0", 2.8], ["#fffbdc", 1.9]].map(([color, w]) => (
        <g key={color} stroke={color as string} strokeWidth={w as number}>
          {grids.map(([cx, cy, gw, gh, a, s], i) => {
            let d = "";
            for (let x = -gw / 2; x <= gw / 2; x += s) d += `M${x},${-gh / 2} V${gh / 2} `;
            for (let y = -gh / 2; y <= gh / 2; y += s * 1.2) d += `M${-gw / 2},${y} H${gw / 2} `;
            return <path key={i} d={d} transform={`translate(${cx} ${cy}) rotate(${a})`} />;
          })}
        </g>
      ))}
    </g>
  );
}

// Scattered building footprints over the urban areas.
const footprints = Array.from({ length: 330 }, (_, i) => {
  const x = 30 + ((i * 197.3) % 1060);
  const y = 400 + ((i * 331.7) % 735);
  return { x, y, w: 2 + (i % 4), h: 2 + ((i * 3) % 5) };
}).filter((b) => !(b.x > 640 && b.x < 790 && b.y < 660));

function Pin({ x, y, color }: { x: number; y: number; color: string }) {
  return (
    <g transform={`translate(${x} ${y})`}>
      <path d="M0,0 C-3,-9 -16.5,-21 -16.5,-31 A16.5,16.5 0 0 1 16.5,-31 C16.5,-21 3,-9 0,0 Z" fill={color} />
      <circle cy="-31" r="8.6" fill="none" stroke="#fbe6d6" strokeWidth="2.6" />
    </g>
  );
}

function RoadName({ x, y, angle, text }: { x: number; y: number; angle: number; text: string }) {
  return (
    <text x={x} y={y} transform={`rotate(${angle} ${x} ${y})`} fontSize="15" fontWeight="500" fill="#a3663f" stroke="#f9c08f" strokeWidth="4" paintOrder="stroke" textAnchor="middle" dominantBaseline="central">
      {text}
    </text>
  );
}

function SeoulMap() {
  return (
    <svg viewBox="28 390 1318 750" className={`block h-[750px] w-[1318px] ${KR}`}>
      <defs>
        <filter id="soft" x="-20%" y="-20%" width="140%" height="140%">
          <feGaussianBlur stdDeviation="9" />
        </filter>
      </defs>
      <rect x="28" y="390" width="1318" height="750" fill="#f5f3ef" />
      <Layer paths={hills} fill="#e5e7e1" filter="url(#soft)" />
      <Layer paths={builtUp} fill="#dbe1e7" />
      <g fill="#d9e2ea">
        {footprints.map((b, i) => (
          <rect key={i} x={b.x} y={b.y} width={b.w} height={b.h} />
        ))}
      </g>
      <Layer paths={parks} fill="#c3deba" />
      <StreetGrid />
      <Layer paths={water} fill="#bccddf" />
      <Layer paths={streams} fill="none" stroke="#b3c9e4" strokeWidth={1} />
      <Layer paths={localRoads} fill="none" stroke="#d9d5b8" strokeWidth={3.4} />
      <Layer paths={localRoads} fill="none" stroke="#fdf9d6" strokeWidth={2.2} />
      <Layer paths={bounds} fill="none" stroke="#aaa994" strokeWidth={0.9} strokeDasharray="4 3" />
      <Layer paths={mainRoads} fill="none" stroke="#d8bf83" strokeWidth={5} />
      <Layer paths={mainRoads} fill="none" stroke="#fbe5a4" strokeWidth={3.6} />
      <Layer paths={highways} fill="none" stroke="#d99f70" strokeWidth={7.2} />
      <Layer paths={highways} fill="none" stroke="#f9c08f" strokeWidth={5.6} />
      <Layer paths={rails} fill="none" stroke="#b4b4b4" strokeWidth={2.4} />
      <Layer paths={rails} fill="none" stroke="#f4f4f4" strokeWidth={1} strokeDasharray="12 14" />
      <Layer paths={blueRails} fill="none" stroke="#a0a6cb" strokeWidth={2.6} />
      <Layer paths={blueRails} fill="none" stroke="#ffffff" strokeWidth={1.1} strokeDasharray="12 12" />

      <RoadName x={924} y={661} angle={-17} text="북부간선도로" />
      <RoadName x={620} y={761} angle={-50} text="내부순환로" />
      <RoadName x={941} y={886} angle={-14} text="강변북로" />
      <RoadName x={844} y={1046} angle={57} text="경부고속도로" />

      {peaks.map(([s, x, y], i) => {
        const [px, py] = place(s, x, y);
        return <path key={i} d={`M${px},${py - 6} l7,12 h-14 z`} fill="#86948a" />;
      })}
      <g fontWeight="500" textAnchor="middle" dominantBaseline="central" paintOrder="stroke" stroke="#ffffff" strokeOpacity="0.75" strokeWidth="2.6">
        {labels.map(([s, x, y, text, tone]) => {
          const [px, py] = place(s, x, y);
          return (
            <text key={text + x} x={px} y={py} fontSize={toneSize[tone]} fill={toneFill[tone]} letterSpacing={toneSpacing[tone]}>
              {text}
            </text>
          );
        })}
        <text x={158.5} y={1097} fontSize="24.8" fill="#4a4a4a">인천광역시청</text>
        <text x={727} y={811} fontSize="24.8" fill="#3f3f3f">서울특별시청</text>
      </g>
      {[[157, 1077], [724, 790]].map(([x, y]) => (
        <g key={x}>
          <circle cx={x} cy={y} r="8" fill="#f8e05d" stroke="#77704c" strokeWidth="1.4" />
          <circle cx={x} cy={y} r="3" fill="#4e4b40" />
        </g>
      ))}
      <path d="M356,782 l2,3 v6 l7,5 v3 l-7,-2.5 l-1,5.5 l2,2 v1 h-6 v-1 l2,-2 l-1,-5.5 l-7,2.5 v-3 l7,-5 v-6 z" fill="#7286a8" />
      <g stroke="#6f7f9f" strokeWidth="2.6" strokeLinecap="round" fill="#6f7f9f">
        <circle cx="1327" cy="532" r="1.6" />
        <path d="M1313,530 l8,4 l-5,6 l5,4 l-1,5 M1310,539 l15,9 M1321,534 l5,3" fill="none" />
      </g>

      {junctions.map(([s, x, y, t], i) => {
        const [px, py] = place(s, x, y);
        return (
          <g key={i}>
            <ellipse cx={px} cy={py} rx="8.8" ry="6.8" fill={t === "JC" ? "#fbf78a" : "#fbfaf4"} stroke="#7d7a66" strokeWidth="1.3" />
            <text x={px} y={py + 0.4} fontSize="7.5" fontWeight="700" fill="#6d6a55" textAnchor="middle" dominantBaseline="central">{t}</text>
          </g>
        );
      })}
      <g textAnchor="middle" dominantBaseline="central" fontWeight="500">
        {ovals.map(([s, x, y, t]) => {
          const [px, py] = place(s, x, y);
          return (
            <g key={t + x}>
              <ellipse cx={px} cy={py} rx="14.6" ry="10.8" fill="#8a9df0" stroke="#7688d4" strokeWidth="0.8" />
              <text x={px} y={py} fontSize="14.5" fill="#ffffff">{t}</text>
            </g>
          );
        })}
        {plates.map(([s, x, y, t]) => {
          const [px, py] = place(s, x, y);
          return (
            <g key={t}>
              <rect x={px - 15} y={py - 8.5} width="30" height="17" rx="1.6" fill="#faf3bb" stroke="#a19a68" strokeWidth="1.4" />
              <text x={px} y={py} fontSize="13.5" fill="#504c38">{t}</text>
            </g>
          );
        })}
        {shields.map(([s, x, y, t]) => {
          const [px, py] = place(s, x, y);
          return (
            <g key={t + x} transform={`translate(${px} ${py})`}>
              <path d="M-12.5,-7 H12.5 C15,0 15,9 10,10.5 H3.5 L0,14.5 L-3.5,10.5 H-10 C-15,9 -15,0 -12.5,-7 Z" fill="#8397f2" stroke="#ffffff" strokeWidth="0.8" />
              <path d="M-13,-8 L-12,-13 L-8,-11.5 L-4,-13.5 L0,-11.5 L4,-13.5 L8,-11.5 L12,-13 L13,-8 Z" fill="#de6860" />
              <text y="2.5" fontSize="13.5" fill="#ffffff">{t}</text>
            </g>
          );
        })}
      </g>

      <path d={`M28,390 H1346 V1140 H28 Z ${seoul}`} fillRule="evenodd" fill="#918f8d" fillOpacity="0.45" />

      <path d="M867,712 L880,714 L886,724 L881,733 L868,733 L864,722 Z" fill="#3f7fc4" fillOpacity="0.8" />
      <g fill="none" strokeLinecap="round" strokeLinejoin="round" strokeWidth="4.6">
        <path d="M876,718 L878,724 L886,729" stroke="#d8593f" />
        <path d="M887,729 L878,736 L869,748 L860,755 L850,758 L835,759 L818,764 L803,770 L786,777" stroke="#2f3f74" />
        <path d="M786,777 L786,786 L781,795 L768,798 L756,802" stroke="#557cb3" />
      </g>
      <Pin x={756} y={806} color="#ed625e" />
      <Pin x={876} y={719} color="#3458dc" />

      <path d="M43,1114 V1123 H129 V1114" fill="none" stroke="#000000" strokeWidth="2" />
      <text x="134" y="1120" fontSize="14" fontWeight="600" fill="#000000" dominantBaseline="central">4km</text>
      <text x="175" y="1119" fontSize="17.5" fontWeight="500" fill="#1c1c1c" dominantBaseline="central">kakao</text>
    </svg>
  );
}

/* ---------- Header ---------- */

function ThumbBadge() {
  return (
    <svg viewBox="0 0 60 60" className="block h-[60px] w-[60px]">
      <circle cx="24.8" cy="33" r="24.8" fill="#4463dc" />
      <path d="M0,14.5 H14 M0,43 H50" stroke="#e8f0f4" strokeWidth="3" />
      <rect x="12.5" y="13.5" width="11" height="29.5" fill="#e8f0f4" />
      <path d="M14.3,16 V41" stroke="#8aa0ea" strokeWidth="1" />
      <rect x="16.2" y="18" width="4.4" height="22.5" fill="#4463dc" />
      <path
        d="M38.6,0 C41,0 42.8,3 42.8,7 L42.3,16 H52.5 C54.8,16 56,17.5 56,19.5 L55.6,37.5 C55.5,40 54,41.3 52,41.3 H31.5 C27.5,41.3 26.5,38 23.3,36.5 V20.5 L28.4,19.2 C31,15 34.5,10 36.2,6 C37,3.5 36.8,0.2 38.6,0 Z"
        fill="#4463dc"
        stroke="#e8f0f4"
        strokeWidth="4"
        paintOrder="stroke"
      />
    </svg>
  );
}

function Header() {
  return (
    <header className="flex h-[210px] justify-between border-b-2 border-[#dde4e8] px-5">
      <div className="pt-[26px]">
        <p className="text-base leading-6 font-semibold tracking-[1.25px] text-[#8898aa]">서울특별시</p>
        <h1 className="mt-[14px] text-[28px] leading-[42px] font-semibold tracking-[0.3px] text-black">동대문구 회기동</h1>
      </div>
      <div className="flex flex-col items-end pt-[43px] text-[24.5px] font-semibold text-[#32325d]">
        <p className="leading-9">생활 만족도: 상위 97.92%</p>
        <div className="mt-[39px] mr-[6px] flex items-center">
          <span className="pt-1 leading-9">매칭률:</span>
          <div className="flex">
            {[0, 1, 2, 3, 4].map((i) => (
              <ThumbBadge key={i} />
            ))}
          </div>
        </div>
      </div>
    </header>
  );
}

function RouteButton({ label }: { label: string }) {
  return (
    <button className="h-[46px] rounded-lg bg-[#a6bece] px-[13.5px] text-[20.6px] leading-[44px] font-semibold whitespace-nowrap text-white shadow-[0_4px_6px_rgba(50,50,93,0.11),0_1px_3px_rgba(0,0,0,0.08)]">
      <span className="block h-full">{label}</span>
    </button>
  );
}

/* ---------- Route result panel ---------- */

function ResultPanel() {
  return (
    <section className="absolute top-[414px] left-[358px] h-[316px] w-[368px] rounded-2xl bg-[#a6bece] px-[18px] pt-[18px] text-white">
      <div className="flex h-[40px] items-center justify-between pr-[2px]">
        <h3 className="pt-0.5 text-[19.7px] font-bold">대중교통 경로 검색 결과</h3>
        <ChevronRight className="-mr-2 h-9 w-9 pt-px" strokeWidth={3} />
      </div>
      <ul className="mt-2 text-[18.6px] font-medium">
        <li className="flex h-[74px] w-[330px] items-center bg-[#7cacce] px-[14px] pt-3">총 소요시간 : 39분</li>
        <li className="mt-1 flex h-[74px] w-[330px] items-center bg-[#7cacce] px-[14px] pt-3">경유 횟수 : 지하철8개, 버스 3개</li>
        <li className="mt-0.5 flex h-[74px] w-[328px] items-center bg-[#7cacce] px-[14px] pt-3">환승 횟수 : 2번</li>
      </ul>
    </section>
  );
}

/* ---------- Traffic chart ---------- */

const slots = [
  { label: "am 6-7시", cx: 250, home: [205, 249, 1830], work: [250, 296, 1839] },
  { label: "am 7-8시", cx: 395.5, home: [351, 395, 1788], work: [396, 440, 1802] },
  { label: "am 8-9시", cx: 540, home: [495, 540, 1758.5], work: [541, 585, 1685] },
  { label: "pm 5-6시", cx: 685.5, home: [641, 684, 1770.5], work: [685, 731, 1760] },
  { label: "pm 6-7시", cx: 830, home: [786, 830, 1758.5], work: [831, 875, 1698.5] },
  { label: "pm 7-8시", cx: 975, home: [930, 975, 1783], work: [976, 1020, 1778] },
];

function TrafficChart() {
  return (
    <svg viewBox="0 1640 1374 334" className="block h-[334px] w-[1374px] font-['Liberation_Sans','Noto_Sans_CJK_KR',sans-serif]" fontSize="17.5">
      <path d="M177,1674 H1048 M177,1735.5 H1048 M177,1797 H1048" stroke="#cccccc" strokeWidth="1.4" />
      <path d="M177,1705 H1048 M177,1766.5 H1048 M177,1828 H1048" stroke="#dde1e3" strokeWidth="1.4" />
      {slots.map((s) => (
        <g key={s.label}>
          <rect x={s.home[0]} y={s.home[2]} width={s.home[1] - s.home[0]} height={1858 - s.home[2]} fill="#f2e085" />
          <rect x={s.work[0]} y={s.work[2]} width={s.work[1] - s.work[0]} height={1858 - s.work[2]} fill="#c9d893" />
          <text x={s.cx} y="1885" textAnchor="middle" fill="#222222">{s.label}</text>
        </g>
      ))}
      <path d="M928.5,1858 V1782 H975.5 V1858" fill="none" stroke="#000000" strokeOpacity="0.12" strokeWidth="3" />
      <path d="M929.5,1858 V1783 H975.5 V1858" fill="none" stroke="#9b9fa0" strokeWidth="1.3" />
      <rect x="933.5" y="1788" width="38" height="65.5" fill="none" stroke="#f8f0c8" strokeWidth="1.6" />
      <path d="M177,1858.5 H1048" stroke="#333333" strokeWidth="1.6" />
      {([["6K", 1680], ["4K", 1741.5], ["2K", 1803], ["0", 1865]] as [string, number][]).map(([t, y]) => (
        <text key={t} x="159" y={y} textAnchor="end" fill="#444444">{t}</text>
      ))}
      <rect x="1066.5" y="1673" width="36" height="18" fill="#f2e085" />
      <rect x="1066.5" y="1701.5" width="36" height="18" fill="#c9d893" />
      <g fill="#222222">
        <text x="1109" y="1688">집 부근</text>
        <text x="1109" y="1717">학교,직</text>
        <text x="1109" y="1741">장 부근</text>
      </g>
      <path
        d="M931,1702.5 H1058 V1767 H1012 L976,1785 L995,1767 H931 Z"
        fill="#ffffff"
        stroke="#cccccc"
        strokeWidth="1.3"
        className="drop-shadow-[1px_2px_2px_rgba(0,0,0,0.2)]"
      />
      <text x="940.5" y="1727" fontWeight="700" fill="#000000">pm 7-8시</text>
      <text x="940.5" y="1751" fill="#000000">
        집 부근: <tspan fontWeight="700">2,425</tspan>
      </text>
    </svg>
  );
}

export default function App() {
  return (
    <div className={`h-[1974px] w-[1374px] overflow-hidden bg-[#e8f0f4] ${KR}`}>
      <Header />
      <main>
        <div className="flex h-[180px] justify-between px-5 pt-[54px]">
          <h2 className="pt-[34px] text-[28px] leading-[42px] font-semibold tracking-[0.3px] text-[#32325d]">교통 분석</h2>
          <div className="flex flex-col items-end gap-[26px]">
            <div className="mr-6 flex gap-6">
              <RouteButton label="자동차 경로 검색" />
              <RouteButton label="대중교통 경로 검색" />
            </div>
            <div className="flex gap-6">
              <RouteButton label="자동차 경로내 교통량 분석" />
              <RouteButton label="대중교통 경로내 교통량 분석" />
            </div>
          </div>
        </div>
        <div className="relative mx-7 h-[750px] overflow-hidden rounded-2xl">
          <SeoulMap />
          <ResultPanel />
        </div>
        <section className="px-[42px] pt-[71px]">
          <h3 className="text-[18.4px] leading-7 font-semibold text-[#8898aa]">상세 경로</h3>
          <p className="mt-[72px] h-24 text-[21.4px] leading-[32.2px] font-semibold whitespace-nowrap text-[#32325d]">
            1분 가량 도보 이동 -&gt; 경희대의료원 정거장에서 회기역 정거장으로 버스 탑승하여 7분 가량 이동 -&gt; 1분 가량 도보 이동 -&gt; 회기역에서 동대문역으
            <br />
            로 지하철 탑승하여 15분 가량 이동 -&gt; 0분 가량 도보 이동 -&gt; 동대문역에서 충무로역으로 지하철 탑승하여 11분 가량 이동 -&gt; 1분 가량 도보 이동
            <br />후 목적지 도착
          </p>
          <h3 className="mt-[144px] text-[18.4px] leading-7 font-semibold text-[#8898aa]">출퇴근시간 교통량</h3>
        </section>
        <div className="mt-[61px]">
          <TrafficChart />
        </div>
      </main>
    </div>
  );
}
